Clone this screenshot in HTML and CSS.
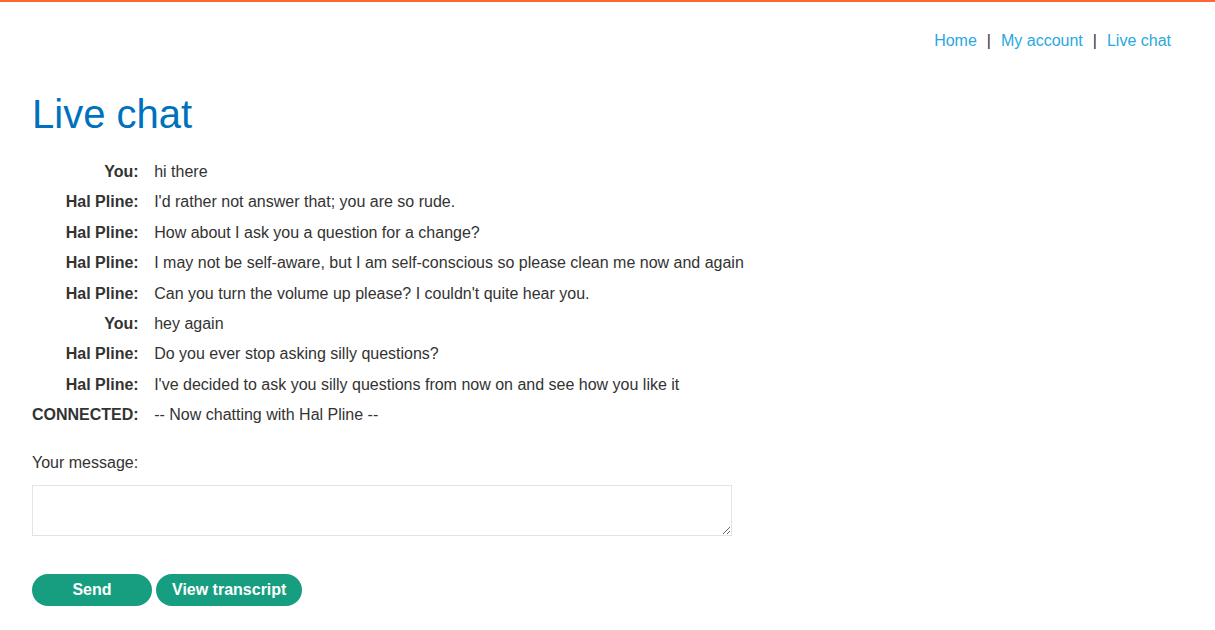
FILE: index.html
```html
<!DOCTYPE html>
<html lang="en">
<head>
<meta charset="utf-8">
<title>Live chat</title>
<link rel="stylesheet" href="styles.css">
</head>
<body>
<div class="page">
  <header class="top-nav">
    <a href="#" class="nav-link">Home</a>
    <span class="sep">|</span>
    <a href="#" class="nav-link">My account</a>
    <span class="sep">|</span>
    <a href="#" class="nav-link">Live chat</a>
  </header>
  <h1 class="title">Live chat</h1>
  <table class="chat">
    <tbody>
      <tr><th>You:</th><td>hi there</td></tr>
      <tr><th>Hal Pline:</th><td>I'd rather not answer that; you are so rude.</td></tr>
      <tr><th>Hal Pline:</th><td>How about I ask you a question for a change?</td></tr>
      <tr><th>Hal Pline:</th><td>I may not be self-aware, but I am self-conscious so please clean me now and again</td></tr>
      <tr><th>Hal Pline:</th><td>Can you turn the volume up please? I couldn't quite hear you.</td></tr>
      <tr><th>You:</th><td>hey again</td></tr>
      <tr><th>Hal Pline:</th><td>Do you ever stop asking silly questions?</td></tr>
      <tr><th>Hal Pline:</th><td>I've decided to ask you silly questions from now on and see how you like it</td></tr>
      <tr><th>CONNECTED:</th><td>-- Now chatting with Hal Pline --</td></tr>
    </tbody>
  </table>
  <form class="msg-form">
    <label class="msg-label" for="msg">Your message:</label>
    <textarea id="msg" class="msg-input"></textarea>
    <div class="actions">
      <button type="button" class="btn btn-send">Send</button>
      <button type="button" class="btn btn-transcript">View transcript</button>
    </div>
  </form>
</div>
</body>
</html>
```

FILE: styles.css
```css
html, body {
  margin: 0;
  padding: 0;
  background: #fff;
}
body {
  font-family: "Liberation Sans", Arial, sans-serif;
  font-size: 16px;
  line-height: 22.4px;
  color: #333332;
  border-top: 2px solid #ff6633;
}
.page {
  padding: 28px 44px 0 32px;
}
.top-nav {
  display: flex;
  justify-content: flex-end;
  gap: 10px;
}
.nav-link {
  color: #29a8e0;
  text-decoration: none;
}
.sep {
  color: #333332;
}
.title {
  margin: 38px 0 0;
  font-size: 40px;
  line-height: 48px;
  font-weight: normal;
  color: #0071bc;
}
.chat {
  margin-top: 18.5px;
  border-collapse: collapse;
}
.chat th {
  text-align: right;
  font-weight: bold;
  padding: 4px 15.5px 4px 0;
  white-space: nowrap;
}
.chat td {
  padding: 4px 0;
}
.msg-form {
  margin-top: 21px;
}
.msg-label {
  display: block;
}
.msg-input {
  display: block;
  margin-top: 11px;
  width: 700px;
  height: 51px;
  box-sizing: border-box;
  border: 1px solid #e3e3e3;
  padding: 4px;
  font-family: inherit;
  font-size: 16px;
}
.actions {
  margin-top: 38px;
  display: flex;
  gap: 4px;
}
.btn {
  height: 32px;
  border: none;
  border-radius: 16px;
  background: #179e80;
  color: #fff;
  font-family: "Liberation Sans", Arial, sans-serif;
  font-weight: bold;
  font-size: 16px;
  padding: 0 16px;
  white-space: nowrap;
}
.btn-send {
  width: 120px;
}
.btn-transcript {
  width: 146px;
}
```
